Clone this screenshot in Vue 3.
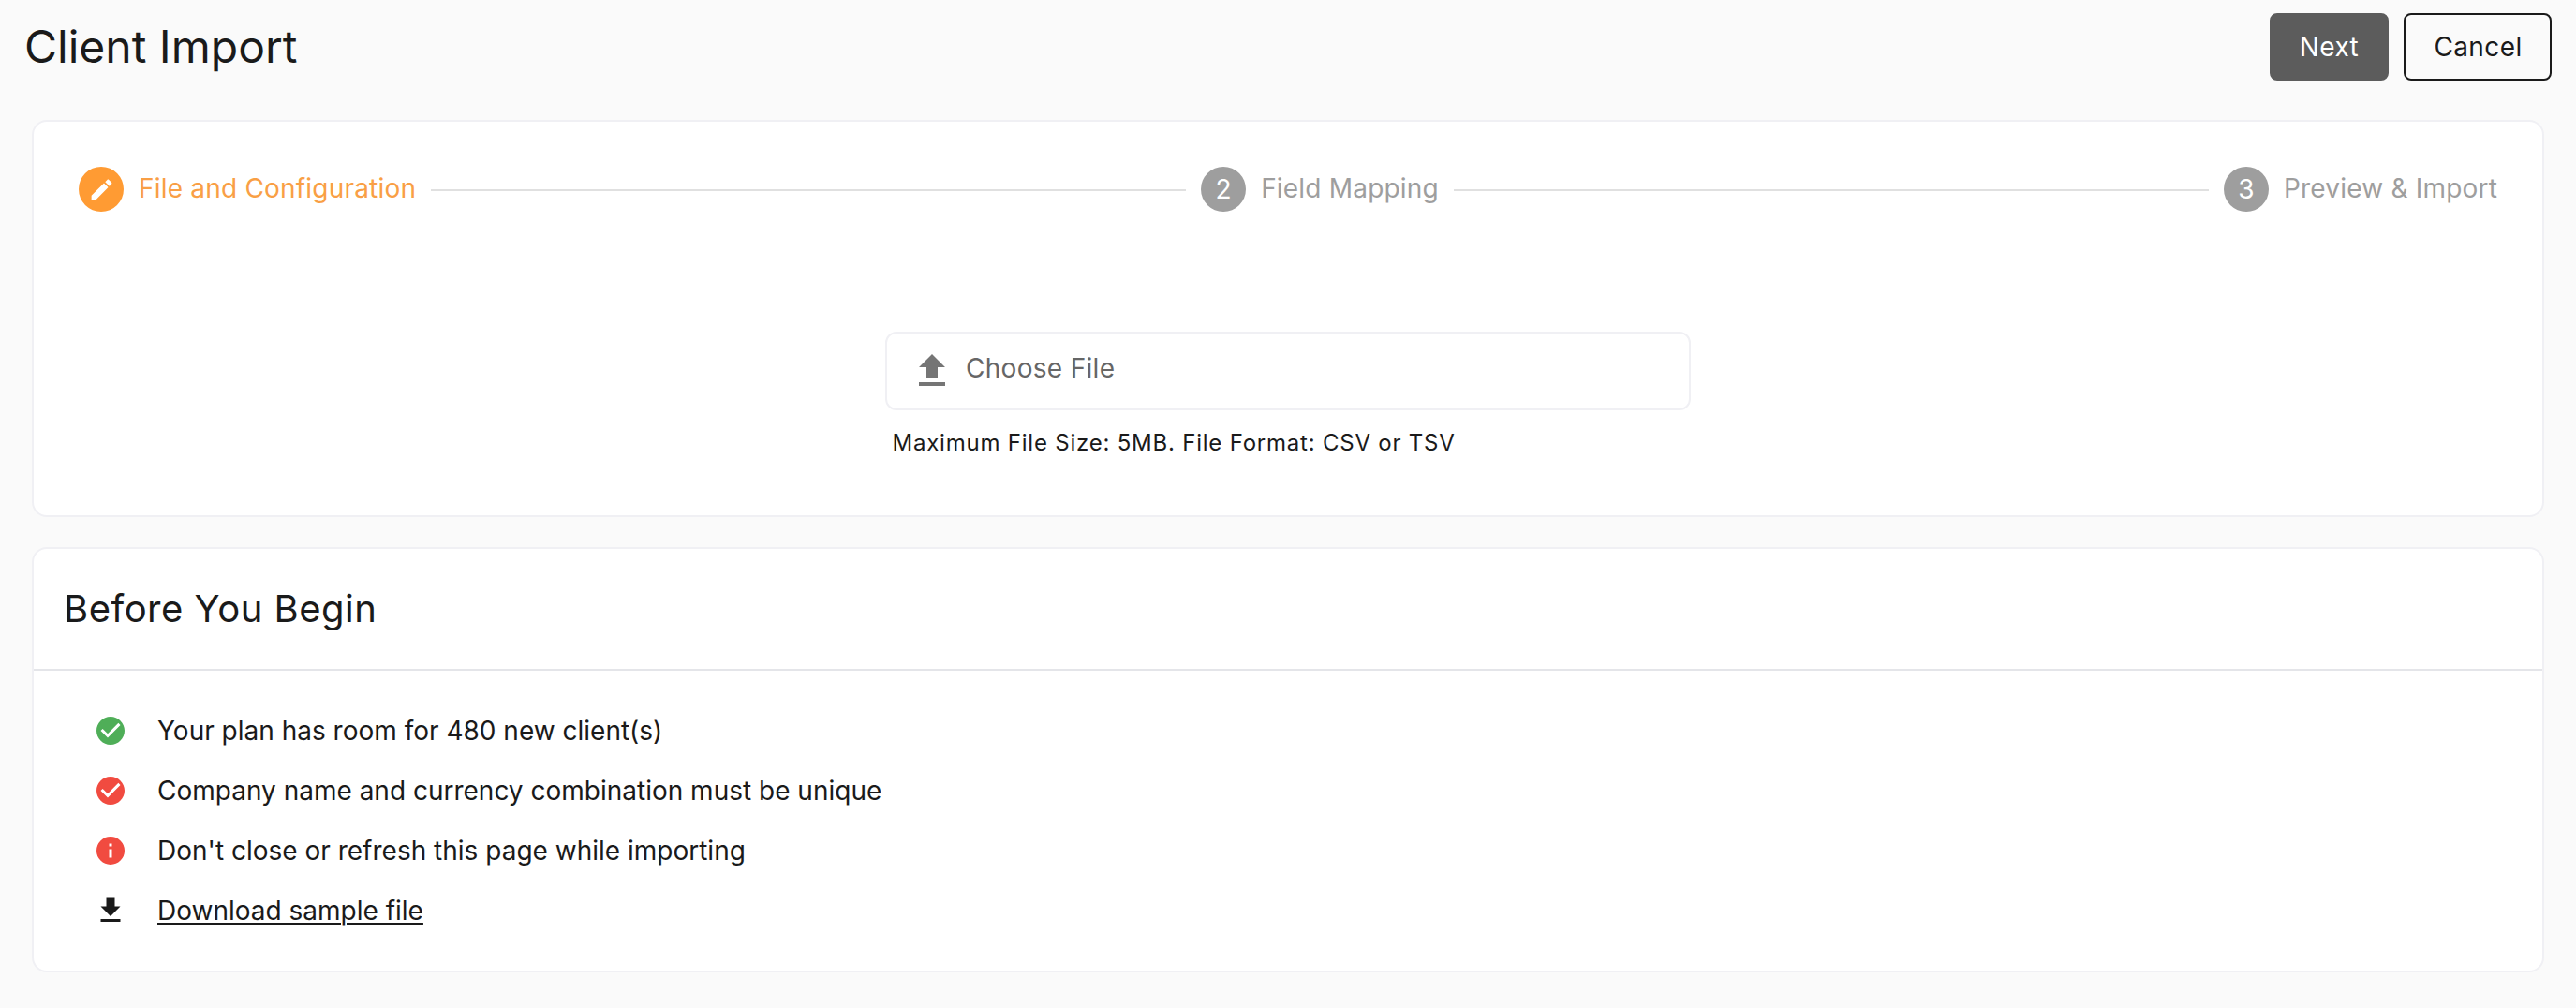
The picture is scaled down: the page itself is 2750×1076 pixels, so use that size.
<script setup>
const icons = {
  check: 'M12 2C6.5 2 2 6.5 2 12S6.5 22 12 22 22 17.5 22 12 17.5 2 12 2M10 17L5 12L6.41 10.59L10 14.17L17.59 6.58L19 8L10 17Z',
  info: 'M13,9H11V7H13M13,17H11V11H13M12,2A10,10 0 0,0 2,12A10,10 0 0,0 12,22A10,10 0 0,0 22,12A10,10 0 0,0 12,2Z',
  download: 'M5,20H19V18H5M19,9H15V3H9V9H5L12,16L19,9Z',
  upload: 'M9,16V10H5L12,3L19,10H15V16H9M5,20V18H19V20H5Z',
  pencil: 'M20.71,7.04C21.1,6.65 21.1,6 20.71,5.63L18.37,3.29C18,2.9 17.35,2.9 16.96,3.29L15.12,5.12L18.87,8.87M3,17.25V21H6.75L17.81,9.93L14.06,6.18L3,17.25Z',
}

const steps = [
  { number: 1, label: 'File and Configuration', active: true },
  { number: 2, label: 'Field Mapping' },
  { number: 3, label: 'Preview & Import' },
]

const notes = [
  { icon: 'check', tone: 'green', text: 'Your plan has room for 480 new client(s)' },
  { icon: 'check', tone: 'red', text: 'Company name and currency combination must be unique' },
  { icon: 'info', tone: 'red', text: "Don't close or refresh this page while importing" },
  { icon: 'download', tone: 'dark', text: 'Download sample file', link: true },
]
</script>

<template>
  <div class="page">
    <header class="topbar">
      <h1>Client Import</h1>
      <div class="actions">
        <button class="btn next">Next</button>
        <button class="btn cancel">Cancel</button>
      </div>
    </header>

    <section class="card import">
      <div class="stepper">
        <template v-for="(step, i) in steps" :key="step.number">
          <span v-if="i" class="line"></span>
          <div class="step" :class="{ active: step.active }">
            <span class="badge">
              <svg v-if="step.active" viewBox="0 0 24 24"><path :d="icons.pencil" /></svg>
              <template v-else>{{ step.number }}</template>
            </span>
            <span class="label">{{ step.label }}</span>
          </div>
        </template>
      </div>

      <div class="upload">
        <div class="file">
          <svg viewBox="0 0 24 24"><path :d="icons.upload" /></svg>
          <span>Choose File</span>
        </div>
        <p class="hint">Maximum File Size: 5MB. File Format: CSV or TSV</p>
      </div>
    </section>

    <section class="card begin">
      <h2>Before You Begin</h2>
      <ul>
        <li v-for="note in notes" :key="note.text">
          <svg viewBox="0 0 24 24" :class="note.tone"><path :d="icons[note.icon]" /></svg>
          <a v-if="note.link">{{ note.text }}</a>
          <span v-else>{{ note.text }}</span>
        </li>
      </ul>
    </section>
  </div>
</template>

<style>
body {
  margin: 0;
  background: #fafafa;
}
</style>

<style scoped>
.page {
  box-sizing: border-box;
  height: 1076px;
  background: #fafafa;
  color: #1a1a1a;
  font-family: Inter, "Liberation Sans", sans-serif;
  font-size: 28px;
}
svg {
  display: block;
  flex: none;
  fill: currentColor;
}
.topbar {
  display: flex;
  justify-content: space-between;
  padding: 14px 26px 0;
  height: 114px;
}
h1 {
  margin: 0;
  font-size: 48px;
  font-weight: 400;
  line-height: 72px;
}
.actions {
  display: flex;
  gap: 16px;
}
.btn {
  box-sizing: border-box;
  height: 72px;
  padding: 0;
  border: 2px solid #1a1a1a;
  border-radius: 8px;
  background: transparent;
  color: #1a1a1a;
  font: inherit;
  letter-spacing: 0.4px;
}
.next {
  width: 127px;
  border-color: #5c5c5c;
  background: #5c5c5c;
  color: #fff;
}
.cancel {
  width: 158px;
  padding-left: 1px;
}
.card {
  box-sizing: border-box;
  margin: 0 34px;
  border: 2px solid #f0f0f4;
  border-radius: 16px;
  background: #fff;
}
.import {
  height: 424px;
}
.stepper {
  display: flex;
  align-items: center;
  gap: 16px;
  padding: 48px 48px 0;
}
.line {
  flex: 1;
  height: 2px;
  margin-top: 2px;
  background: #e0e0e0;
}
.step {
  display: flex;
  align-items: center;
  gap: 16px;
  color: #9e9e9e;
  letter-spacing: 0.2px;
}
.badge {
  display: flex;
  align-items: center;
  justify-content: center;
  width: 48px;
  height: 48px;
  border-radius: 50%;
  background: #9e9e9e;
  color: #fff;
}
.badge svg {
  width: 29px;
  height: 29px;
}
.label {
  line-height: 44px;
  padding-bottom: 2px;
}
.active {
  color: #f99f45;
}
.active .badge {
  background: #ff9b33;
}
.upload {
  width: 860px;
  margin: 128px auto 0;
}
.file {
  box-sizing: border-box;
  display: flex;
  align-items: center;
  height: 84px;
  padding-left: 24px;
  border: 2px solid #f0f0f4;
  border-radius: 12px;
  color: #757575;
}
.file svg {
  width: 48px;
  height: 48px;
}
.file span {
  margin-left: 12px;
  padding-bottom: 7px;
  color: #666;
  letter-spacing: 0.3px;
}
.hint {
  margin: 17px 0 0 7.5px;
  font-size: 24px;
  line-height: 36px;
  letter-spacing: 0.78px;
}
.begin {
  height: 454px;
  margin-top: 32px;
}
h2 {
  margin: 0;
  padding: 0 32px;
  border-bottom: 2px solid #e4e5e9;
  font-size: 40px;
  font-weight: 400;
  line-height: 128px;
  letter-spacing: 0.5px;
}
ul {
  margin: 0;
  padding: 32px 64px 0;
  list-style: none;
}
li {
  display: flex;
  align-items: center;
  gap: 32px;
  height: 64px;
}
li svg {
  width: 36px;
  height: 36px;
}
li:nth-child(3) {
  height: 63px;
}
li:last-child {
  height: 66px;
}
.green {
  color: #4fae58;
}
.red {
  color: #f14b40;
}
a {
  text-decoration: underline;
  text-decoration-thickness: 2px;
  text-underline-offset: 3px;
}
</style>
